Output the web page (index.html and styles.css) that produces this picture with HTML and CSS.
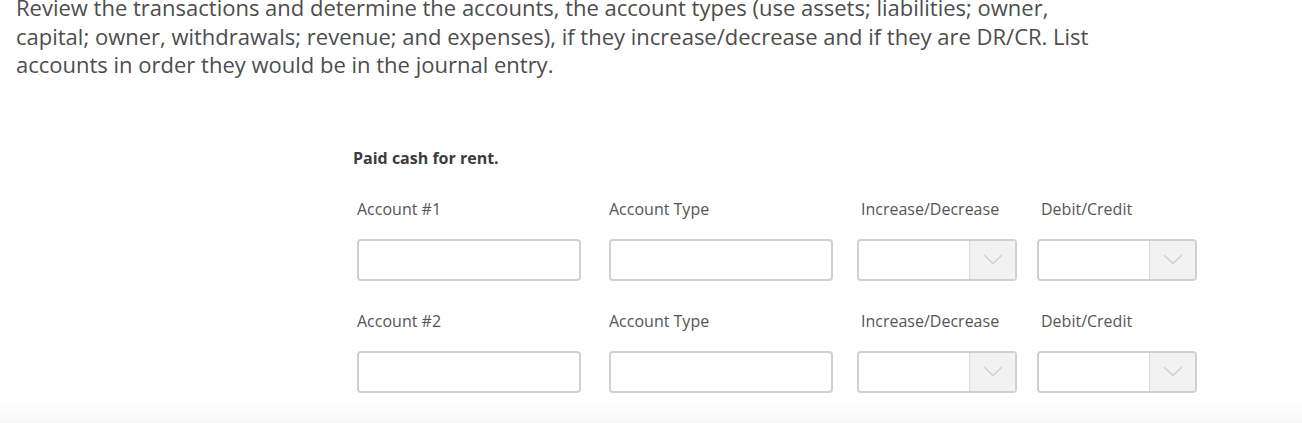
FILE: index.html
```html
<!DOCTYPE html>
<html>
<head>
<meta charset="utf-8">
<link rel="stylesheet" href="styles.css">
</head>
<body>
<p class="intro">Review the transactions and determine the accounts, the account types (use assets; liabilities; owner, capital; owner, withdrawals; revenue; and expenses), if they increase/decrease and if they are DR/CR. List accounts in order they would be in the journal entry.</p>
<div class="form">
  <div class="title">Paid cash for rent.</div>
  <div class="grid">
    <div class="label">Account #1</div>
    <div class="label">Account Type</div>
    <div class="label sel">Increase/Decrease</div>
    <div class="label sel">Debit/Credit</div>
    <div class="input"></div>
    <div class="input"></div>
    <div class="select"><span class="val"></span><span class="arrow"><svg width="20" height="11" viewBox="0 0 20 11"><path d="M1 1 L10 9.5 L19 1" fill="none" stroke="#cfcfcf" stroke-width="1.3"/></svg></span></div>
    <div class="select"><span class="val"></span><span class="arrow"><svg width="20" height="11" viewBox="0 0 20 11"><path d="M1 1 L10 9.5 L19 1" fill="none" stroke="#cfcfcf" stroke-width="1.3"/></svg></span></div>
    <div class="label row2">Account #2</div>
    <div class="label row2">Account Type</div>
    <div class="label sel row2">Increase/Decrease</div>
    <div class="label sel row2">Debit/Credit</div>
    <div class="input"></div>
    <div class="input"></div>
    <div class="select"><span class="val"></span><span class="arrow"><svg width="20" height="11" viewBox="0 0 20 11"><path d="M1 1 L10 9.5 L19 1" fill="none" stroke="#cfcfcf" stroke-width="1.3"/></svg></span></div>
    <div class="select"><span class="val"></span><span class="arrow"><svg width="20" height="11" viewBox="0 0 20 11"><path d="M1 1 L10 9.5 L19 1" fill="none" stroke="#cfcfcf" stroke-width="1.3"/></svg></span></div>
  </div>
</div>
<div class="fade"></div>
</body>
</html>
```
FILE: styles.css
```css
html, body {
  margin: 0;
  padding: 0;
  background: #fff;
  overflow: hidden;
}
body {
  font-family: "Open Sans", "Liberation Sans", sans-serif;
  color: #444;
  height: 423px;
  display: flex;
  flex-direction: column;
}
.intro {
  margin: -7px 0 0 16px;
  width: 1100px;
  font-size: 22px;
  line-height: 28.5px;
  color: #4d4d4d;
}
.form {
  margin: 68px 0 0 353px;
}
.title {
  font-size: 16px;
  font-weight: bold;
  color: #3c3c3c;
  line-height: 22px;
}
.grid {
  margin-top: 29px;
  margin-left: 4px;
  display: grid;
  grid-template-columns: 252px 248px 180px 160px;
  grid-template-rows: 41px 42px 70px 42px;
}
.label {
  font-size: 16px;
  line-height: 22px;
  color: #555;
}
.label.sel {
  padding-left: 4px;
}
.label.row2 {
  margin-top: 29px;
}
.input, .select {
  box-sizing: border-box;
  width: 224px;
  height: 42px;
  border: 2px solid #d0d0d0;
  border-radius: 4px;
  background: #fff;
}
.select {
  width: 160px;
  display: flex;
}
.val {
  flex: 1;
}
.arrow {
  width: 45px;
  background: #f2f2f2;
  border-left: 1px solid #dcdcdc;
  border-radius: 0 2px 2px 0;
  display: flex;
  align-items: center;
  justify-content: center;
}
.fade {
  margin-top: auto;
  height: 20px;
  background: linear-gradient(#ffffff, #f6f6f6);
}
```
